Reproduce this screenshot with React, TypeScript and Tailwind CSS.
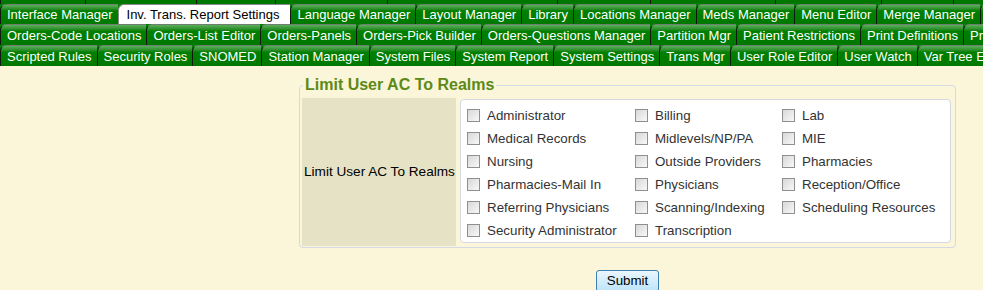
const TOP_STUBS = [
  'w-[85px]', 'w-[111px]', 'w-[79px]', 'w-[112px]', 'w-[170px]',
  'w-[93px]', 'w-[125px]', 'w-[106px]', 'w-[72px]', 'w-[120px]'
]

const TAB_ROWS: { label: string; active?: boolean }[][] = [
  [
    { label: 'Interface Manager' },
    { label: 'Inv. Trans. Report Settings', active: true },
    { label: 'Language Manager' },
    { label: 'Layout Manager' },
    { label: 'Library' },
    { label: 'Locations Manager' },
    { label: 'Meds Manager' },
    { label: 'Menu Editor' },
    { label: 'Merge Manager' },
    { label: 'Message Center' },
  ],
  [
    { label: 'Orders-Code Locations' },
    { label: 'Orders-List Editor' },
    { label: 'Orders-Panels' },
    { label: 'Orders-Pick Builder' },
    { label: 'Orders-Questions Manager' },
    { label: 'Partition Mgr' },
    { label: 'Patient Restrictions' },
    { label: 'Print Definitions' },
    { label: 'Provider Groups' },
  ],
  [
    { label: 'Scripted Rules' },
    { label: 'Security Roles' },
    { label: 'SNOMED' },
    { label: 'Station Manager' },
    { label: 'System Files' },
    { label: 'System Report' },
    { label: 'System Settings' },
    { label: 'Trans Mgr' },
    { label: 'User Role Editor' },
    { label: 'User Watch' },
    { label: 'Var Tree Editor' },
  ],
]

const REALMS = [
  'Administrator', 'Billing', 'Lab',
  'Medical Records', 'Midlevels/NP/PA', 'MIE',
  'Nursing', 'Outside Providers', 'Pharmacies',
  'Pharmacies-Mail In', 'Physicians', 'Reception/Office',
  'Referring Physicians', 'Scanning/Indexing', 'Scheduling Resources',
  'Security Administrator', 'Transcription',
]

function Tab({ label, active }: { label: string; active?: boolean }) {
  return (
    <div
      className={
        active
          ? 'shrink-0 h-full flex items-center pl-[8px] pr-[11px] border-l border-t border-[#8a8a8a] rounded-tl-[6px] bg-white text-black'
          : 'shrink-0 h-full flex items-center pl-[6px] pr-[5px] border-l border-l-[#101810] border-t border-t-[#6f7f6f] rounded-tl-[6px] bg-linear-to-b from-[#5cb05c] via-[#008000] via-[30%] to-[#007800] text-white'
      }
    >
      {label}
    </div>
  )
}

export default function App() {
  return (
    <div className="min-h-[290px] bg-[#fbf5d9] font-['Liberation_Sans',Arial,sans-serif] text-[13px] leading-none overflow-hidden">
      {/* Tab strip */}
      <div className="bg-[#008000]">
        <div className="flex h-[4px] overflow-hidden">
          {TOP_STUBS.map((w, i) => (
            <div key={i} className={`${w} shrink-0 h-full bg-[#007800] border-l border-[#101810]`} />
          ))}
        </div>
        <div className="flex h-[20px] overflow-hidden whitespace-nowrap">
          {TAB_ROWS[0].map(t => <Tab key={t.label} {...t} />)}
        </div>
        <div className="flex h-[21px] overflow-hidden whitespace-nowrap">
          {TAB_ROWS[1].map(t => <Tab key={t.label} {...t} />)}
        </div>
        <div className="flex h-[21px] overflow-hidden whitespace-nowrap">
          {TAB_ROWS[2].map(t => <Tab key={t.label} {...t} />)}
        </div>
      </div>

      {/* Settings form */}
      <div className="pl-[299px] pt-[10px]">
        <div className="w-[657px] flex flex-col items-center">
          <fieldset className="w-full border border-[#d3dae3] rounded-[4px] pl-[2px] pr-[4px] pt-[4px] pb-[1px]">
            <legend className="px-[2px] ml-[1px] text-[16px] leading-[18px] font-bold text-[#5b8a17]">
              Limit User AC To Realms
            </legend>
            <div className="flex gap-[4px]">
              <div className="w-[154px] h-[148px] shrink-0 bg-[#e6e2c5] flex items-center px-[2px] text-black text-[13.6px] whitespace-nowrap">
                Limit User AC To Realms
              </div>
              <div className="flex-1 mt-[1px] h-[144px] bg-white border border-[#d3dae3] rounded-[4px] pl-[6px] pt-[4px]">
                <div className="grid grid-cols-[168px_147px_1fr]">
                  {REALMS.map(r => (
                    <label key={r} className="h-[23px] flex items-center gap-[7px] text-[#333] text-[13.33px] whitespace-nowrap">
                      <input
                        type="checkbox"
                        className="appearance-none w-[13px] h-[13px] shrink-0 border border-[#8e8f8f] bg-linear-to-br from-[#d8d8d8] to-[#f8f8f8]"
                      />
                      {r}
                    </label>
                  ))}
                </div>
              </div>
            </div>
          </fieldset>
          <button className="mt-[22px] h-[22px] px-[10px] border border-[#3c7fb1] rounded-[3px] bg-linear-to-b from-[#eaf6fd] to-[#bde4fa] text-black text-[13.33px]">
            Submit
          </button>
        </div>
      </div>
    </div>
  )
}
